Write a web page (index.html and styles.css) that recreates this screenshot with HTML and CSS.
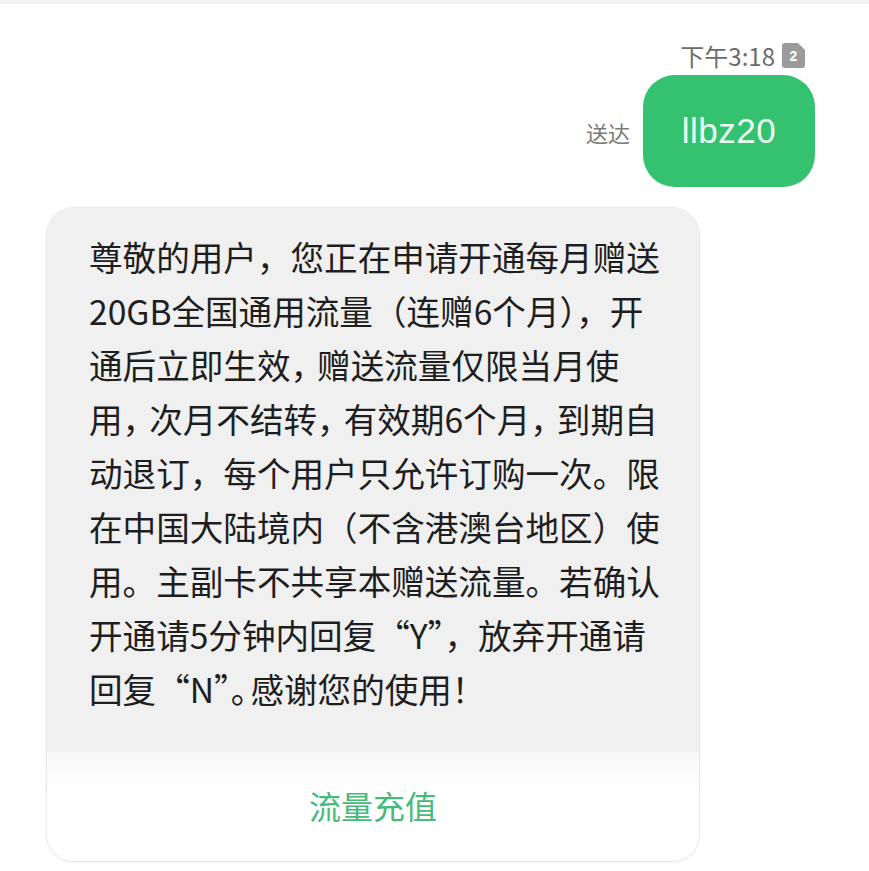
FILE: index.html
```html
<!DOCTYPE html>
<html lang="zh-CN">
<head>
  <meta charset="UTF-8" />
  <meta name="viewport" content="width=device-width, initial-scale=1.0" />
  <title>短信</title>
  <link rel="stylesheet" href="styles.css">
</head>
<body>

  <div class="topbar"></div>

  <div class="meta">
    <span class="time">下午3:18</span>
    <svg class="sim" width="23" height="25" viewBox="0 0 23 25">
      <path d="M3 0 H16 L23 7 V22 Q23 25 20 25 H3 Q0 25 0 22 V3 Q0 0 3 0 Z" fill="#9b9b9b"/>
      <text x="11.5" y="18" text-anchor="middle" font-family="Liberation Sans, Arial, sans-serif" font-size="14" font-weight="bold" fill="#fff">2</text>
    </svg>
  </div>

  <div class="sent-row">
    <span class="status">送达</span>
    <div class="bubble">llbz20</div>
  </div>

  <div class="card">
    <div class="card-body">
      <div class="line">尊敬的用户，您正在申请开通每月赠送</div>
      <div class="line">20GB全国通用流量（连赠6个月），开</div>
      <div class="line">通后立即生效<span class="tight">，</span>赠送流量仅限当月使</div>
      <div class="line">用<span class="tight">，</span>次月不结转<span class="tight">，</span>有效期6个月<span class="tight">，</span>到期自</div>
      <div class="line">动退订，每个用户只允许订购一次。限</div>
      <div class="line">在中国大陆境内（不含港澳台地区）使</div>
      <div class="line">用。主副卡不共享本赠送流量。若确认</div>
      <div class="line">开通请5分钟内回复“Y”，放弃开通请</div>
      <div class="line">回复“N”<span class="tighter">。</span>感谢您的使用！</div>
    </div>
    <div class="card-action">流量充值</div>
  </div>

</body>
</html>
```

FILE: styles.css
```css
body { margin: 0; background: #fff; font-family: "Noto Sans CJK SC", "Noto Sans", sans-serif; width: 869px; height: 871px; overflow: hidden; }
.topbar { height: 4px; background: #f1f1f1; }

.meta { display: flex; justify-content: flex-end; align-items: center; gap: 7px; padding: 37px 64px 0 0; height: 30px; }
.time { font-size: 24px; color: #6b6b6b; line-height: 30px; }
.sim { display: block; margin-top: -2px; }

.sent-row { display: flex; justify-content: flex-end; align-items: center; gap: 13px; padding: 4px 54px 0 0; }
.status { font-size: 22px; color: #7a7a7a; margin-top: 2px; }
.bubble { width: 172px; height: 112px; border-radius: 32px; background: #34c270; color: #eafff1; font-family: "Liberation Sans", "Noto Sans", sans-serif; font-size: 35px; display: flex; align-items: center; justify-content: center; letter-spacing: 0.5px; }

.card { margin: 20px 0 0 46px; width: 654px; height: 655px; border-radius: 28px; overflow: hidden; border: 1px solid #e8e8e8; box-sizing: border-box; box-shadow: 0 1px 3px rgba(0,0,0,0.06); display: flex; flex-direction: column; }
.card-body { background: #f0f0f0; padding: 22px 0 36px 42px; }
.line { font-size: 33.6px; line-height: 54px; color: #1e1e1e; white-space: nowrap; }
.tight { letter-spacing: -7px; }
.tighter { letter-spacing: -14px; }
.card-action { flex: 1; background: linear-gradient(#f8f8f8, #fff 40%); display: flex; align-items: center; justify-content: center; font-size: 32px; color: #46b97b; padding-bottom: 4px; }
```
